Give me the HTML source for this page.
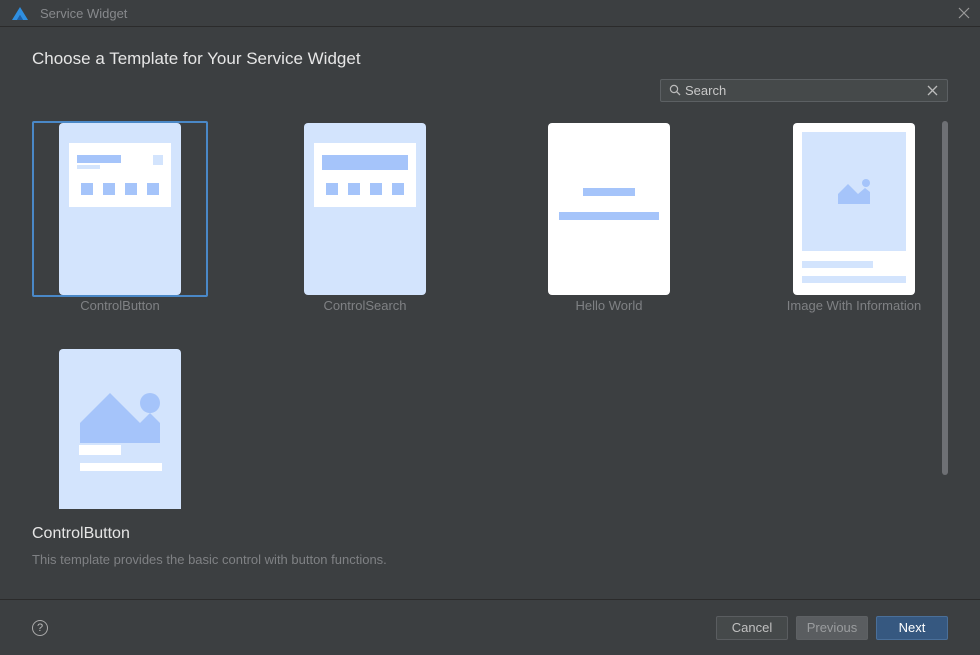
<!DOCTYPE html>
<html><head><style>
*{margin:0;padding:0;box-sizing:border-box}
body{width:980px;height:655px;background:#3c3f41;font-family:"Liberation Sans",sans-serif;position:relative;overflow:hidden;color:#bbb}
.a{position:absolute}
.card{position:absolute;top:123px;width:122px;height:172px;background:#d3e4fd;border-radius:4px}
.w{background:#fff}
.b{background:#a5c4fa;position:absolute}
.lab{position:absolute;top:298px;font-size:13px;color:#7f8184;text-align:center;width:200px}
.btn{position:absolute;top:616px;width:72px;height:24px;border:1px solid #5a5d60;border-radius:2px;font-size:13px;text-align:center;line-height:22px}
</style></head><body>
<div class="a" style="left:0;top:0;width:980px;height:27px;border-bottom:1px solid #2b2b2b;background:#3c3f41"></div>
<svg class="a" style="left:11px;top:6px" width="18" height="15" viewBox="0 0 18 15"><path d="M9 1 L1 14 H6 L9 9 L12 14 H17 Z" fill="#2f8fe0"/><path d="M9 9 L6 14 H12 Z" fill="#1d5fa8"/></svg>
<div class="a" style="left:40px;top:6px;font-size:13px;color:#87898c">Service Widget</div>
<svg class="a" style="left:958px;top:7px" width="12" height="12"><path d="M1 1L11 11M11 1L1 11" stroke="#9a9a9a" stroke-width="1.2"/></svg>
<div class="a" style="left:32px;top:49px;font-size:17px;color:#e6e6e6">Choose a Template for Your Service Widget</div>
<div class="a" style="left:660px;top:79px;width:288px;height:23px;border:1px solid #5c6063;background:#45494a;border-radius:2px"></div>
<svg class="a" style="left:669px;top:84px" width="13" height="13" viewBox="0 0 13 13"><circle cx="5" cy="5" r="3.6" fill="none" stroke="#bbb" stroke-width="1.2"/><path d="M7.7 7.7 L11 11" stroke="#bbb" stroke-width="1.3"/></svg>
<div class="a" style="left:685px;top:83px;font-size:13px;color:#c8c8c8">Search</div>
<svg class="a" style="left:927px;top:85px" width="11" height="11"><path d="M1 1L10 10M10 1L1 10" stroke="#bbb" stroke-width="1.3"/></svg>

<div class="a" style="left:32px;top:121px;width:176px;height:176px;border:2px solid #4a88c7;border-radius:2px"></div>
<div class="card" style="left:59px"><div class="a w" style="left:10px;top:20px;width:102px;height:64px"></div>
<div class="b" style="left:18px;top:32px;width:44px;height:8px"></div><div class="a" style="left:18px;top:42px;width:23px;height:4px;background:#d3e4fd"></div><div class="a" style="left:94px;top:32px;width:10px;height:10px;background:#d3e4fd"></div>
<div class="b" style="left:22px;top:60px;width:12px;height:12px"></div><div class="b" style="left:44px;top:60px;width:12px;height:12px"></div><div class="b" style="left:66px;top:60px;width:12px;height:12px"></div><div class="b" style="left:88px;top:60px;width:12px;height:12px"></div></div>
<div class="lab" style="left:20px">ControlButton</div>

<div class="card" style="left:304px"><div class="a w" style="left:10px;top:20px;width:102px;height:64px"></div>
<div class="b" style="left:18px;top:32px;width:86px;height:15px"></div>
<div class="b" style="left:22px;top:60px;width:12px;height:12px"></div><div class="b" style="left:44px;top:60px;width:12px;height:12px"></div><div class="b" style="left:66px;top:60px;width:12px;height:12px"></div><div class="b" style="left:88px;top:60px;width:12px;height:12px"></div></div>
<div class="lab" style="left:265px">ControlSearch</div>

<div class="card w" style="left:548px"><div class="b" style="left:35px;top:65px;width:52px;height:8px"></div><div class="b" style="left:11px;top:89px;width:100px;height:8px"></div></div>
<div class="lab" style="left:509px">Hello World</div>

<div class="card w" style="left:793px"><div class="a" style="left:9px;top:9px;width:104px;height:119px;background:#d3e4fd"></div>
<svg class="a" style="left:45px;top:56px" width="33" height="26" viewBox="0 0 33 26"><circle cx="28" cy="4" r="4" fill="#a5c4fa"/><path d="M0 15 L10 5 L20 15 L27 9 L32 13 V25 H0 Z" fill="#a5c4fa"/></svg>
<div class="a" style="left:9px;top:138px;width:71px;height:7px;background:#d3e4fd"></div><div class="a" style="left:9px;top:153px;width:104px;height:7px;background:#d3e4fd"></div></div>
<div class="lab" style="left:754px">Image With Information</div>

<div class="a" style="left:59px;top:349px;width:122px;height:160px;background:#d3e4fd;border-radius:4px 4px 0 0"></div>
<svg class="a" style="left:79px;top:392px" width="84" height="80" viewBox="0 0 84 80"><circle cx="71" cy="11" r="10" fill="#a5c4fa"/><path d="M1 31 L31 1 L61 31 L71 21 L81 31 V51 H1 Z" fill="#a5c4fa"/><rect x="0" y="53" width="42" height="10" fill="#fff"/><rect x="1" y="71" width="82" height="8" fill="#fff"/></svg>

<div class="a" style="left:942px;top:121px;width:6px;height:354px;background:#6e7074;border-radius:3px"></div>
<div class="a" style="left:32px;top:525px;font-size:16px;color:#e6e6e6">ControlButton</div>
<div class="a" style="left:32px;top:552px;font-size:13px;color:#7f8184">This template provides the basic control with button functions.</div>
<div class="a" style="left:0;top:599px;width:980px;height:1px;background:#2b2b2b"></div>
<div class="a" style="left:32px;top:620px;width:16px;height:16px;border:1.3px solid #aaa;border-radius:50%;font-size:11px;text-align:center;line-height:14px;color:#bbb">?</div>
<div class="btn" style="left:716px;background:#45494a;color:#c0c0c0">Cancel</div>
<div class="btn" style="left:796px;background:#5a5d60;border-color:#5e6164;color:#9a9c9e">Previous</div>
<div class="btn" style="left:876px;background:#365880;border-color:#4a6f99;color:#fff">Next</div>
</body></html>
